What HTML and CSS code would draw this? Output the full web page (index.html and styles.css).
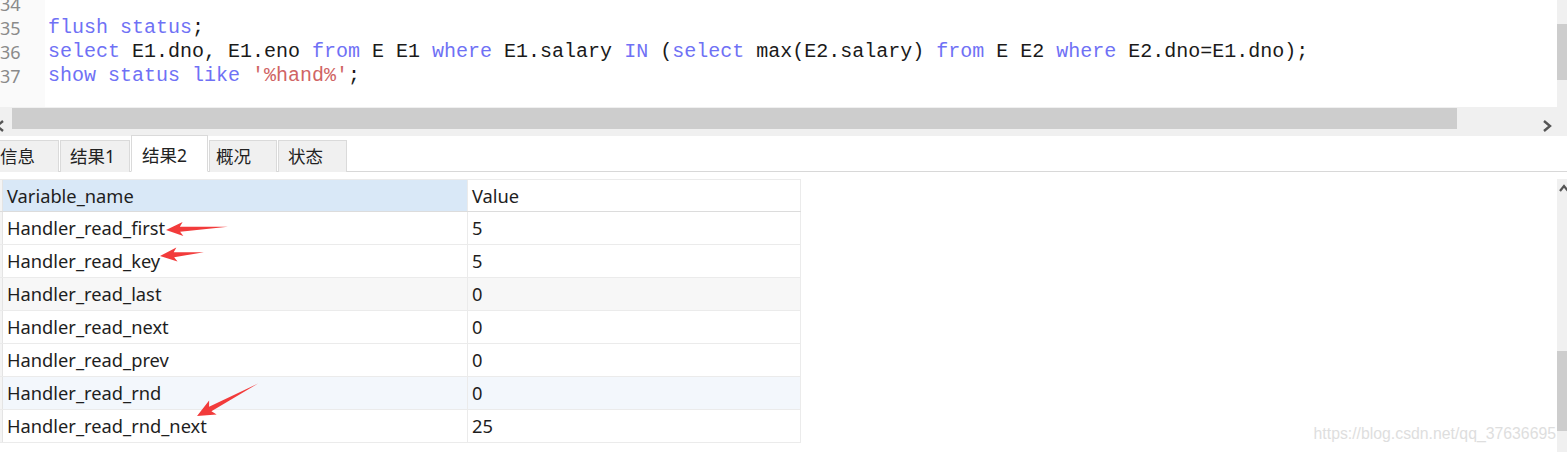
FILE: index.html
```html
<!DOCTYPE html>
<html lang="zh">
<head>
    <meta charset="UTF-8">
    <title>状态</title>
    <link rel="stylesheet" href="styles.css">
</head>
<body>

    <div class="editor">
        <div class="gutter">
            <div class="lines">
                <div>34</div>
                <div>35</div>
                <div>36</div>
                <div>37</div>
            </div>
        </div>
        <div class="code">
            <div class="lines">
                <div>&nbsp;</div>
                <div><span class="kw">flush status</span>;</div>
                <div><span class="kw">select</span> E1.dno, E1.eno <span class="kw">from</span> E E1 <span class="kw">where</span> E1.salary <span class="kw">IN</span> (<span class="kw">select</span> max(E2.salary) <span class="kw">from</span> E E2 <span class="kw">where</span> E2.dno=E1.dno);</div>
                <div><span class="kw">show status like</span> <span class="str">'%hand%'</span>;</div>
            </div>
        </div>
        <div class="vscroll">
            <div class="vthumb"></div>
        </div>
    </div>

    <div class="hscroll">
        <span class="harrow left">
            <svg width="10" height="12" viewBox="0 0 10 12"><path d="M8 1 L2 6 L8 11" fill="none" stroke="#555" stroke-width="2.4"/></svg>
        </span>
        <div class="hthumb"></div>
        <span class="harrow right">
            <svg width="10" height="12" viewBox="0 0 10 12"><path d="M2 1 L8 6 L2 11" fill="none" stroke="#555" stroke-width="2.4"/></svg>
        </span>
    </div>

    <div class="tabs">
        <div class="tab first">信息</div>
        <div class="tab w70">结果1</div>
        <div class="tab active">结果2</div>
        <div class="tab w67">概况</div>
        <div class="tab w68">状态</div>
    </div>

    <div class="results">
        <div class="grid">
            <div class="row head">
                <div class="rh"></div>
                <div class="cell name">Variable_name</div>
                <div class="cell val">Value</div>
            </div>
            <div class="row">
                <div class="rh"></div>
                <div class="cell name">Handler_read_first</div>
                <div class="cell val">5</div>
            </div>
            <div class="row">
                <div class="rh"></div>
                <div class="cell name">Handler_read_key</div>
                <div class="cell val">5</div>
            </div>
            <div class="row gray">
                <div class="rh"></div>
                <div class="cell name">Handler_read_last</div>
                <div class="cell val">0</div>
            </div>
            <div class="row">
                <div class="rh"></div>
                <div class="cell name">Handler_read_next</div>
                <div class="cell val">0</div>
            </div>
            <div class="row">
                <div class="rh"></div>
                <div class="cell name">Handler_read_prev</div>
                <div class="cell val">0</div>
            </div>
            <div class="row blue">
                <div class="rh"></div>
                <div class="cell name">Handler_read_rnd</div>
                <div class="cell val">0</div>
            </div>
            <div class="row">
                <div class="rh"></div>
                <div class="cell name">Handler_read_rnd_next</div>
                <div class="cell val">25</div>
            </div>
        </div>
        <div class="gscroll">
            <svg class="up" width="10" height="8" viewBox="0 0 10 8"><path d="M1 7 L5 2 L9 7" fill="none" stroke="#555" stroke-width="2.2"/></svg>
            <div class="gthumb"></div>
        </div>
        <div class="watermark">https://blog.csdn.net/qq_37636695</div>
    </div>

    <!-- red annotation arrows -->
    <svg class="marks" width="1567" height="452">
        <g transform="translate(166 230) rotate(-3)">
            <polygon points="0,0 17,-7 14,-2.5 62,0 14,2.5 17,7"/>
        </g>
        <g transform="translate(160 256) rotate(-5)">
            <polygon points="0,0 17,-7 14,-2.5 44,0 14,2.5 17,7"/>
        </g>
        <g transform="translate(197 416) rotate(-28)">
            <polygon points="0,0 18,-8 15,-2.5 69,0 15,2.5 18,8"/>
        </g>
    </svg>

</body>
</html>
```

FILE: styles.css
```css
* {
    margin: 0;
    padding: 0;
    box-sizing: border-box;
}

body {
    width: 1567px;
    height: 452px;
    overflow: hidden;
    background: white;
    font-family: "Noto Sans", "Noto Sans CJK SC", sans-serif;
    font-size: 18.3px;
    color: #1e1e1e;
    position: relative;
}

/* Editor */
.editor {
    display: flex;
    height: 107px;
    overflow: hidden;
    background: white;
}

.gutter {
    width: 45px;
    background: #fafafa;
    color: #8a8a8a;
    overflow: hidden;
}

.lines {
    margin-top: -8px;
    font-family: "Liberation Mono", monospace;
    font-size: 20px;
    line-height: 24px;
}

.gutter .lines {
    font-family: "Noto Sans", sans-serif;
    font-size: 18px;
}

.code {
    flex: 1;
    padding-left: 3px;
    color: #1a1a1a;
}

.code .lines > div {
    white-space: pre;
}

.kw {
    color: #6f71f5;
}

.str {
    color: #d06464;
}

.vscroll {
    width: 10px;
    background: #f0f0f0;
    padding-top: 24px;
}

.vthumb {
    height: 56px;
    background: #cdcdcd;
}

.hscroll {
    height: 29px;
    background: #f0f0f0;
    display: flex;
    align-items: flex-start;
    padding-top: 1px;
}

.harrow.left {
    width: 12px;
    margin-left: -5px;
    margin-right: 5px;
    padding-top: 4px;
}

.hthumb {
    width: 1445px;
    height: 21px;
    background: #cdcdcd;
}

.harrow.right {
    margin-left: 85px;
    padding-top: 4px;
}

/* Tabs */
.tabs {
    display: flex;
    align-items: flex-end;
    height: 36px;
    border-bottom: 1px solid #d8d8d8;
}

.tab {
    height: 32px;
    background: #f0f0f0;
    border: 1px solid #dadada;
    border-bottom: none;
    margin-right: 1px;
    line-height: 31px;
    font-size: 17.5px;
    color: #222;
    margin-bottom: -1px;
    padding-left: 9px;
}

.tab.first {
    margin-left: -11px;
    width: 70px;
    padding-left: 10px;
    margin-right: 1px;
}

.w70 {
    width: 70px;
}

.w67 {
    width: 68px;
    padding-left: 6px;
    margin-right: 1px;
}

.w68 {
    width: 69px;
}

.tab.active {
    width: 77px;
    height: 37px;
    background: white;
    line-height: 38px;
    padding-left: 10px;
    border-bottom: 1px solid white;
}

/* Result grid */
.results {
    display: flex;
    padding-top: 7px;
}

.grid {
    width: 801px;
}

.row {
    display: flex;
    height: 33px;
    border-bottom: 1px solid #ebebeb;
}

.row.gray {
    background: #f7f7f7;
}

.row.blue {
    background: #f3f7fc;
}

.rh {
    width: 3px;
    border-right: 1px solid #e4e4e4;
    background: #f4f4f4;
}

.cell {
    line-height: 32px;
    padding-left: 4px;
    border-right: 1px solid #ebebeb;
}

.cell.name {
    width: 465px;
}

.cell.val {
    width: 333px;
}

.head {
    border-bottom: 1px solid #dcdcdc;
    border-top: 1px solid #ebebeb;
}

.head .cell {
    line-height: 31px;
}

.head .cell.name {
    background: #d9e8f7;
}

.gscroll {
    margin-left: auto;
    width: 10px;
    height: 275px;
    background: #f0f0f0;
    display: flex;
    flex-direction: column;
    align-items: center;
}

.gscroll .up {
    margin-top: 5px;
    margin-left: 4px;
}

.gthumb {
    width: 10px;
    height: 80px;
    margin-top: 159px;
    background: #cdcdcd;
}

.watermark {
    position: absolute;
    right: 11px;
    bottom: 9px;
    color: #dedede;
    font-family: "Liberation Sans", Arial, sans-serif;
    font-size: 15.8px;
}

.marks {
    position: absolute;
    left: 0;
    top: 0;
    pointer-events: none;
}

.marks polygon {
    fill: #f23b3b;
}
```
